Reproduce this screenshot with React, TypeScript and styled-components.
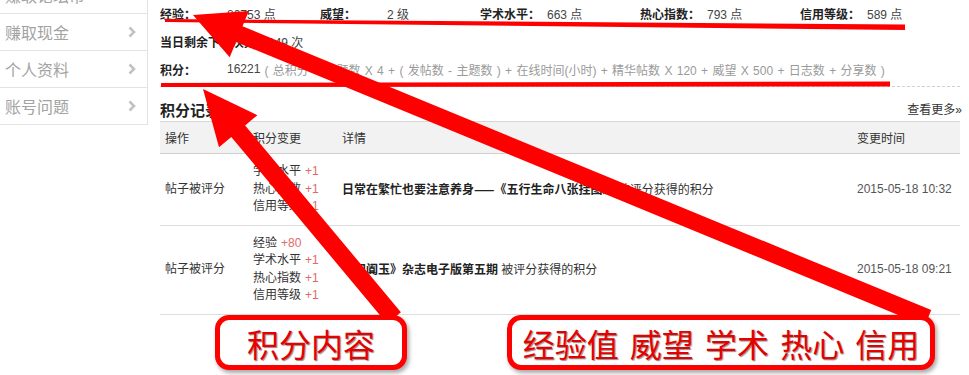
import React from "react";
import styled, { createGlobalStyle } from "styled-components";

const GlobalStyle = createGlobalStyle`
  html, body {
    margin: 0;
    padding: 0;
    background: #fff;
  }
  body {
    font-family: "Liberation Sans", "Noto Sans CJK SC", sans-serif;
    font-size: 12px;
    color: #333;
    overflow: hidden;
  }
`;

const menu = ["赚取论坛币", "赚取现金", "个人资料", "账号问题"];

const stats = [
  { label: "经验", value: "80753 点" },
  { label: "威望", value: "2 级" },
  { label: "学术水平", value: "663 点" },
  { label: "热心指数", value: "793 点" },
  { label: "信用等级", value: "589 点" },
];

const records = [
  {
    action: "帖子被评分",
    changes: [
      ["学术水平", "+1"],
      ["热心指数", "+1"],
      ["信用等级", "+1"],
    ],
    title: "日常在繁忙也要注意养身——《五行生命八张挂图》",
    note: "被评分获得的积分",
    time: "2015-05-18 10:32",
  },
  {
    action: "帖子被评分",
    changes: [
      ["经验", "+80"],
      ["学术水平", "+1"],
      ["热心指数", "+1"],
      ["信用等级", "+1"],
    ],
    title: "《和阗玉》杂志电子版第五期",
    note: "被评分获得的积分",
    time: "2015-05-18 09:21",
  },
];

type Pt = [number, number];

// arrow outline: head at tip, straight shaft back to tail
const arrowPoints = (tip: Pt, tail: Pt, headLen: number, headHalf: number, shaftHalf: number) => {
  const dx = tail[0] - tip[0];
  const dy = tail[1] - tip[1];
  const len = Math.hypot(dx, dy);
  const ux = dx / len;
  const uy = dy / len;
  const px = -uy;
  const py = ux;
  const bx = tip[0] + ux * headLen;
  const by = tip[1] + uy * headLen;
  const pts: Pt[] = [
    tip,
    [bx + px * headHalf, by + py * headHalf],
    [bx + px * shaftHalf, by + py * shaftHalf],
    [tail[0] + px * shaftHalf, tail[1] + py * shaftHalf],
    [tail[0] - px * shaftHalf, tail[1] - py * shaftHalf],
    [bx - px * shaftHalf, by - py * shaftHalf],
    [bx - px * headHalf, by - py * headHalf],
  ];
  return pts.map((p) => `${p[0].toFixed(1)},${p[1].toFixed(1)}`).join(" ");
};

const Chevron = () => (
  <svg width="8" height="12" viewBox="0 0 8 12">
    <polyline points="1.5,1.5 6,6 1.5,10.5" fill="none" stroke="#c2c2c2" strokeWidth="2.6" />
  </svg>
);

const App = () => {
  return (
    <Page>
      <GlobalStyle />
      <Sidebar>
        {menu.map((item) => (
          <MenuItem key={item}>
            <span>{item}</span>
            <Chevron />
          </MenuItem>
        ))}
      </Sidebar>

      <Main>
        <InfoBlock>
          <InfoRow>
            {stats.map((s) => (
              <Stat key={s.label}>
                <Label>{s.label}：</Label>
                <Value>{s.value}</Value>
              </Stat>
            ))}
          </InfoRow>
          <InfoRow>
            <Label>当日剩余下载次数：</Label>
            <Value>149 次</Value>
          </InfoRow>
          <InfoRow>
            <Label $wide>积分：</Label>
            <Value>16221</Value>
            <Formula>
              ( 总积分 = 主题数 X 4 + ( 发帖数 - 主题数 ) + 在线时间(小时) + 精华帖数 X 120 + 威望 X 500 + 日志数 + 分享数 )
            </Formula>
          </InfoRow>
        </InfoBlock>

        <SectionHead>
          <SectionTitle>积分记录</SectionTitle>
          <MoreLink>查看更多»</MoreLink>
        </SectionHead>

        <Table>
          <thead>
            <tr>
              <Th $w={88}>操作</Th>
              <Th $w={89}>积分变更</Th>
              <Th $w={515}>详情</Th>
              <Th>变更时间</Th>
            </tr>
          </thead>
          <tbody>
            {records.map((r) => (
              <tr key={r.time}>
                <Td>{r.action}</Td>
                <Td>
                  {r.changes.map(([name, delta]) => (
                    <ChangeLine key={name}>
                      {name}
                      <Delta>{delta}</Delta>
                    </ChangeLine>
                  ))}
                </Td>
                <Td>
                  <Title>{r.title}</Title> {r.note}
                </Td>
                <Td $muted>{r.time}</Td>
              </tr>
            ))}
          </tbody>
        </Table>
      </Main>

      <Overlay width="969" height="375" viewBox="0 0 969 375">
        <polygon points="165,19 905,24.5 905,30 165,22" fill="#f00" />
        <polygon points="161,83 890,81.5 890,86.5 161,87" fill="#f00" />
        <polygon points={arrowPoints([193, 15], [928, 318], 50, 25, 8.5)} fill="#f00" />
        <polygon points={arrowPoints([203, 89], [394, 318], 55, 25, 9)} fill="#f00" />
      </Overlay>

      <Callout $left={215} $width={192}>积分内容</Callout>
      <Callout $left={507} $width={428}>经验值 威望 学术 热心 信用</Callout>
    </Page>
  );
};

const Page = styled.div`
  position: relative;
  display: flex;
  align-items: flex-start;
  width: 969px;
  height: 375px;
  overflow: hidden;
`;

const Sidebar = styled.ul`
  list-style: none;
  margin: -23px 0 0 0;
  padding: 0;
  width: 147px;
  border-right: 1px solid #e3e3e3;
  flex-shrink: 0;
`;

const MenuItem = styled.li`
  display: flex;
  align-items: center;
  justify-content: space-between;
  height: 36px;
  padding: 0 11px 0 5px;
  border-bottom: 1px solid #e3e3e3;
  font-family: "Noto Sans CJK SC", sans-serif;
  font-size: 16px;
  color: #a3a3a3;
`;

const Main = styled.div`
  margin-left: 12px;
  width: 800px;
`;

const InfoBlock = styled.div`
  margin-top: -1px;
  padding-bottom: 3px;
  border-bottom: 1px dashed #cfcfcf;
`;

const InfoRow = styled.div`
  display: flex;
  align-items: center;
  height: 28px;
  white-space: nowrap;
`;

const Stat = styled.div`
  display: flex;
  width: 160px;
`;

const Label = styled.span<{ $wide?: boolean }>`
  font-family: "Noto Sans CJK SC", sans-serif;
  font-weight: bold;
  color: #222;
  min-width: ${(p) => (p.$wide ? "67px" : "0")};
  ${Stat} & {
    min-width: 67px;
  }
`;

const Value = styled.span`
  color: #444;
`;

const Formula = styled.span`
  color: #9a9a9a;
  margin-left: 4px;
  word-spacing: 1px;
`;

const SectionHead = styled.div`
  display: flex;
  justify-content: space-between;
  align-items: flex-end;
  height: 34px;
`;

const SectionTitle = styled.h3`
  margin: 0;
  font-family: "Noto Sans CJK SC", sans-serif;
  font-size: 15px;
  font-weight: bold;
  line-height: 22px;
  color: #222;
`;

const MoreLink = styled.a`
  color: #333;
  line-height: 22px;
  margin-right: -2px;
  cursor: pointer;
`;

const Table = styled.table`
  width: 100%;
  border-collapse: collapse;
  table-layout: fixed;
`;

const Th = styled.th<{ $w?: number }>`
  box-sizing: border-box;
  width: ${(p) => (p.$w ? `${p.$w}px` : "auto")};
  height: 32px;
  padding: 0 0 0 5px;
  text-align: left;
  font-weight: normal;
  background: #f2f2f2;
  border-top: 1px solid #d6d6d6;
  border-bottom: 1px solid #cfcfcf;
  color: #333;
`;

const Td = styled.td<{ $muted?: boolean }>`
  padding: 9px 0 9px 5px;
  line-height: 17px;
  vertical-align: middle;
  border-bottom: 1px solid #dedede;
  color: ${(p) => (p.$muted ? "#555" : "#333")};
  white-space: nowrap;
`;

const ChangeLine = styled.div`
  line-height: 17.5px;
`;

const Delta = styled.span`
  color: #e06a6a;
  margin-left: 4px;
`;

const Title = styled.b`
  font-family: "Noto Sans CJK SC", sans-serif;
  color: #222;
`;

const Overlay = styled.svg`
  position: absolute;
  top: 0;
  left: 0;
  pointer-events: none;
`;

const Callout = styled.div<{ $left: number; $width: number }>`
  position: absolute;
  top: 315px;
  left: ${(p) => p.$left}px;
  width: ${(p) => p.$width}px;
  height: 55px;
  box-sizing: border-box;
  display: flex;
  align-items: center;
  justify-content: center;
  background: #fff;
  border: 5px solid #f00;
  border-radius: 14px;
  box-shadow: 2px 3px 4px rgba(0, 0, 0, 0.35);
  font-family: "Noto Sans CJK SC", sans-serif;
  font-size: 32px;
  word-spacing: 4px;
  color: #e60000;
  text-shadow: 1px 1px 1px rgba(0, 0, 0, 0.45);
  white-space: nowrap;
`;

export default App;
